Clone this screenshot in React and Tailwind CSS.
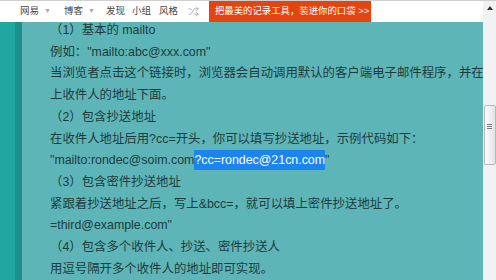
import React from 'react';
import { Shuffle } from 'lucide-react';

const lines = [
    '（1）基本的 mailto',
    '例如："mailto:abc@xxx.com"',
    '当浏览者点击这个链接时，浏览器会自动调用默认的客户端电子邮件程序，并在',
    '上收件人的地址下面。',
    '（2）包含抄送地址',
    '在收件人地址后用?cc=开头，你可以填写抄送地址，示例代码如下：',
    null,
    '（3）包含密件抄送地址',
    '紧跟着抄送地址之后，写上&bcc=，就可以填上密件抄送地址了。',
    '=third@example.com"',
    '（4）包含多个收件人、抄送、密件抄送人',
    '用逗号隔开多个收件人的地址即可实现。',
];

const Arrow = () => <span className="ml-[5px] text-[7px] text-[#aaa]">▼</span>;

export default function App() {
    return (
        <div className="w-[496px] h-[280px] flex overflow-hidden bg-white font-['Liberation_Sans','Noto_Sans_CJK_SC',sans-serif]">
            <div className="flex-1 min-w-0 flex flex-col">
                {/* Top bar */}
                <div className="relative z-10 h-[22px] shrink-0 bg-white border-t border-[#cfcfcf] flex items-stretch text-[9.5px] text-[#444]">
                    <div className="flex items-center pl-[20px] whitespace-nowrap">
                        <span>网易</span>
                        <Arrow />
                        <span className="ml-[13px]">博客</span>
                        <Arrow />
                        <span className="ml-[11px]">发现</span>
                        <span className="ml-[7px]">小组</span>
                        <span className="ml-[8px]">风格</span>
                        <Shuffle size={11} strokeWidth={2} className="ml-[10px] text-[#aaa]" />
                    </div>
                    <div className="ml-[10px] w-[162px] bg-[#e5440f] text-white flex items-center pl-[6px] text-[9.4px] whitespace-nowrap">
                        把最美的记录工具，装进你的口袋 &gt;&gt;
                    </div>
                </div>

                {/* Page body */}
                <div className="flex-1 min-h-0 flex">
                    <div className="w-[15px] bg-[#21a6a1]" />
                    <div className="w-[7px] bg-[#1a8f8b]" />
                    <div className="flex-1 min-w-0 bg-[#5db5b7] overflow-hidden pl-[28px] text-[12.4px] leading-[21.7px] text-[#1d3b3d] whitespace-nowrap">
                        <div className="-mt-[2px]">
                            {lines.map((line, i) =>
                                line === null ? (
                                    <div key={i}>
                                        "mailto:rondec@soim.com
                                        <span className="bg-[#1c84ee] text-white py-[3px]">?cc=rondec@21cn.com</span>
                                        "
                                    </div>
                                ) : (
                                    <div key={i}>{line}</div>
                                )
                            )}
                        </div>
                    </div>
                </div>
            </div>

            {/* Scrollbar */}
            <div className="w-[13px] shrink-0 bg-[#f2f2f2] border-t border-[#cfcfcf] flex flex-col items-center">
                <div className="mt-[5px] w-0 h-0 border-l-[3px] border-r-[3px] border-b-[4px] border-l-transparent border-r-transparent border-b-[#333]" />
                <div className="mt-[95px] w-[12px] h-[60px] rounded-[2px] border border-[#b8b8b8] bg-gradient-to-r from-[#fdfdfd] to-[#e3e3e3] flex flex-col items-center pt-[18px] gap-[1px]">
                    <div className="w-[5px] h-px bg-[#777]" />
                    <div className="w-[5px] h-px bg-[#777]" />
                    <div className="w-[5px] h-px bg-[#777]" />
                </div>
            </div>
        </div>
    );
}
